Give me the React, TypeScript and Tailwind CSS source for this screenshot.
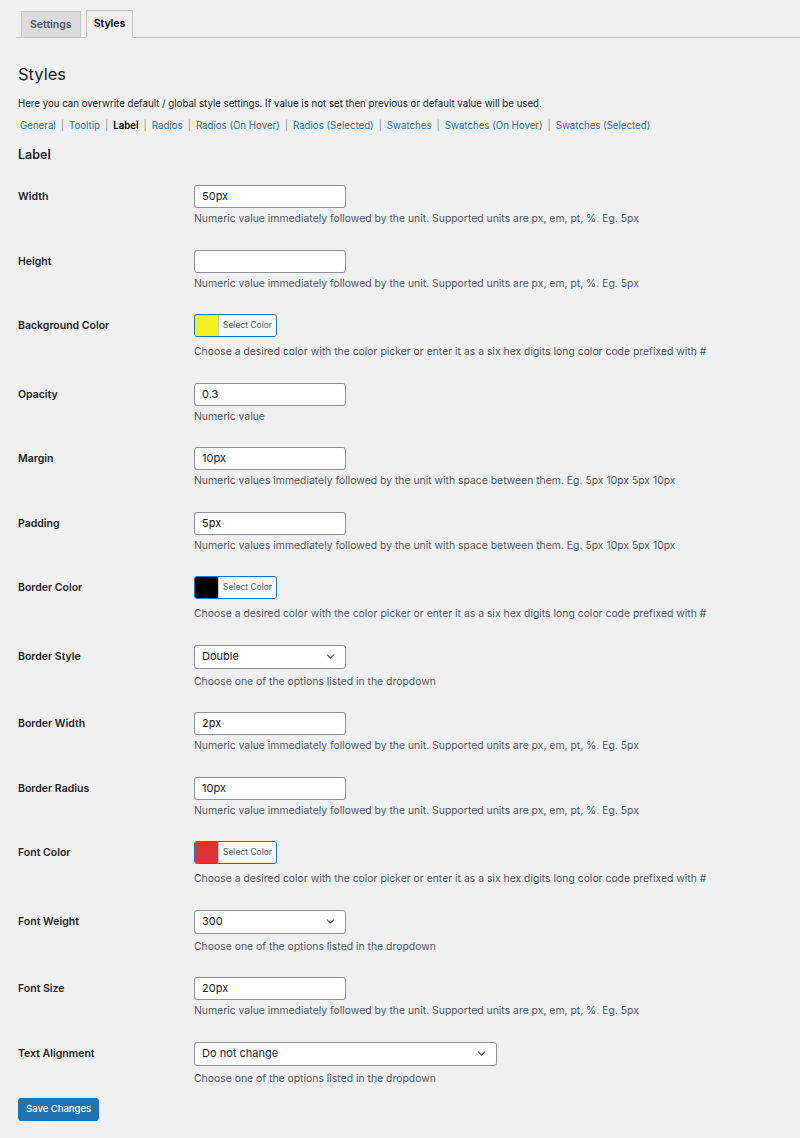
import { ChevronDown } from "lucide-react"

type Field =
  | { kind: "text"; label: string; value: string; help: string }
  | { kind: "color"; label: string; color: string; help: string }
  | { kind: "select"; label: string; value: string; help: string; wide?: boolean }

const UNIT_HELP = "Numeric value immediately followed by the unit. Supported units are px, em, pt, %. Eg. 5px"
const SPACE_HELP = "Numeric values immediately followed by the unit with space between them. Eg. 5px 10px 5px 10px"
const COLOR_HELP = "Choose a desired color with the color picker or enter it as a six hex digits long color code prefixed with #"
const SELECT_HELP = "Choose one of the options listed in the dropdown"

const FIELDS: Field[] = [
  { kind: "text", label: "Width", value: "50px", help: UNIT_HELP },
  { kind: "text", label: "Height", value: "", help: UNIT_HELP },
  { kind: "color", label: "Background Color", color: "#f2f21f", help: COLOR_HELP },
  { kind: "text", label: "Opacity", value: "0.3", help: "Numeric value" },
  { kind: "text", label: "Margin", value: "10px", help: SPACE_HELP },
  { kind: "text", label: "Padding", value: "5px", help: SPACE_HELP },
  { kind: "color", label: "Border Color", color: "#000000", help: COLOR_HELP },
  { kind: "select", label: "Border Style", value: "Double", help: SELECT_HELP },
  { kind: "text", label: "Border Width", value: "2px", help: UNIT_HELP },
  { kind: "text", label: "Border Radius", value: "10px", help: UNIT_HELP },
  { kind: "color", label: "Font Color", color: "#dd3333", help: COLOR_HELP },
  { kind: "select", label: "Font Weight", value: "300", help: SELECT_HELP },
  { kind: "text", label: "Font Size", value: "20px", help: UNIT_HELP },
  { kind: "select", label: "Text Alignment", value: "Do not change", help: SELECT_HELP, wide: true },
]

const SECTIONS = [
  "General",
  "Tooltip",
  "Label",
  "Radios",
  "Radios (On Hover)",
  "Radios (Selected)",
  "Swatches",
  "Swatches (On Hover)",
  "Swatches (Selected)",
]

function Control({ field }: { field: Field }) {
  if (field.kind === "color") {
    return (
      <div className="flex h-[23px] w-[83px] overflow-hidden rounded-[3px] border border-[#2271b1]">
        <span className="w-[23px] shrink-0" style={{ backgroundColor: field.color }} />
        <span className="flex flex-1 items-center justify-center border-l border-[#c3c4c7] bg-[#f6f7f7] text-[8.5px] text-[#50575e]">
          Select Color
        </span>
      </div>
    )
  }
  if (field.kind === "select") {
    return (
      <div
        className={`flex h-[24px] items-center justify-between rounded-[3px] border border-[#8c8f94] bg-white pl-[7px] pr-[8px] text-[11px] text-[#1d2327] ${
          field.wide ? "w-[303px]" : "w-[152px]"
        }`}
      >
        <span>{field.value}</span>
        <ChevronDown className="h-[13px] w-[13px] text-[#50575e]" strokeWidth={2.2} />
      </div>
    )
  }
  return (
    <div className="flex h-[23px] w-[152px] items-center rounded-[3px] border border-[#8c8f94] bg-white px-[7px] text-[11px] text-[#1d2327]">
      {field.value}
    </div>
  )
}

function FieldRow({ field }: { field: Field }) {
  const gap = field.kind === "color" ? "mt-[7px]" : field.kind === "select" ? "mt-[5px]" : "mt-[3px]"
  return (
    <div className="flex items-start pb-[11.5px] pt-[12px]">
      <div className="w-[176px] shrink-0 pt-[4px] text-[10.5px] font-semibold leading-[15px] text-[#1d2327]">
        {field.label}
      </div>
      <div className="flex flex-col items-start">
        <Control field={field} />
        <p className={`${gap} text-[10.4px] leading-[15px] text-[#50575e]`}>{field.help}</p>
      </div>
    </div>
  )
}

export default function App() {
  return (
    <div className="min-h-[1138px] bg-[#f0f0f1] font-['Inter',sans-serif] text-[#1d2327]">
      <div className="ml-[16px] flex items-end gap-[5px] border-b border-[#c3c4c7] pl-[5px] pt-[10px]">
        <div className="-mb-px flex h-[27px] items-center border border-[#c3c4c7] bg-[#dcdcde] px-[8px] text-[10.5px] font-semibold text-[#50575e]">
          Settings
        </div>
        <div className="-mb-px flex h-[28px] items-center border border-b-[#f0f0f1] border-[#c3c4c7] bg-[#f0f0f1] px-[7px] text-[10.5px] font-semibold text-[#000]">
          Styles
        </div>
      </div>

      <div className="px-[18px]">
        <h1 className="mt-[24px] text-[16.5px] font-normal leading-[24px]">Styles</h1>
        <p className="mt-[11px] text-[9.7px] leading-[14px]">
          Here you can overwrite default / global style settings. If value is not set then previous or default value will be used.
        </p>
        <div className="mt-[8px] flex items-center pl-[2px] text-[9.7px] leading-[14px]">
          {SECTIONS.map((s, i) => (
            <span key={s} className="flex items-center">
              {i > 0 && <span className="px-[5px] text-[#8c8f94]">|</span>}
              <span className={s === "Label" ? "font-semibold text-black" : "text-[#2271b1]"}>{s}</span>
            </span>
          ))}
        </div>
        <h2 className="mt-[14px] text-[12.5px] font-semibold leading-[16px]">Label</h2>

        <div className="mt-[10px]">
          {FIELDS.map((f) => (
            <FieldRow key={f.label} field={f} />
          ))}
        </div>

        <div className="-mt-[3px]">
          <button className="h-[23px] rounded-[3px] border border-[#2271b1] bg-[#2271b1] px-[7px] text-[9.5px] font-medium text-white">
            Save Changes
          </button>
        </div>
      </div>
    </div>
  )
}
